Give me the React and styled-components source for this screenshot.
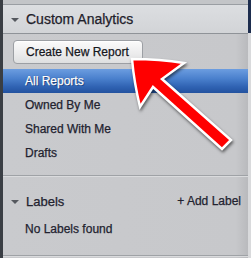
import styled, { createGlobalStyle } from 'styled-components'

const GlobalStyle = createGlobalStyle`
  html, body {
    margin: 0;
    padding: 0;
    background: #c8c9cc;
  }
  body {
    font-family: "Liberation Sans", Arial, sans-serif;
    -webkit-text-stroke: 0.25px currentColor;
  }
`

const Frame = styled.div`
  position: relative;
  width: 251px;
  height: 258px;
  display: flex;
  overflow: hidden;
`

const LeftStrip = styled.div`
  width: 3px;
  background: #3a3e44;
`

const RightStrip = styled.div`
  width: 3px;
  display: flex;
  flex-direction: column;
  background: #d9dadc;

  &::before {
    content: '';
    height: 33px;
    background: #1d2d4e;
  }
`

const Panel = styled.div`
  flex: 1;
  display: flex;
  flex-direction: column;
  background: linear-gradient(90deg, #c9cacd 0%, #c7c8cb 95%, #b9babd 100%);
`

const TopBand = styled.div`
  height: 4px;
  background: #c3c5c8;
  border-bottom: 1px solid #9a9ea3;
`

const Header = styled.div`
  height: 28px;
  display: flex;
  align-items: center;
  padding-left: 8px;
  gap: 7px;
  background: linear-gradient(180deg, #dcdee1 0%, #d2d4d7 100%);
  border-bottom: 1px solid #8f9398;
  color: #1f212b;
  font-size: 14px;
`

const Caret = styled.span`
  width: 0;
  height: 0;
  border-left: 4px solid transparent;
  border-right: 4px solid transparent;
  border-top: 4px solid #55585e;
  margin-top: 1px;
`

const ButtonRow = styled.div`
  padding: 6px 0 5px 10px;
`

const Button = styled.button`
  width: 130px;
  height: 24px;
  border: 1px solid #9c9fa4;
  border-radius: 4px;
  background: linear-gradient(180deg, #fbfbfb 0%, #ebebec 60%, #dedfe0 100%);
  box-shadow: inset 0 1px 0 #ffffff;
  font-family: "Liberation Sans", Arial, sans-serif;
  font-size: 12px;
  color: #16171d;
  -webkit-text-stroke: 0.25px #16171d;
  text-align: left;
  padding: 0 0 0 12px;
`

const NavList = styled.div`
  display: flex;
  flex-direction: column;
`

const NavItem = styled.div`
  height: 24px;
  display: flex;
  align-items: center;
  padding-left: 22px;
  font-size: 12px;
  color: ${p => (p.$active ? '#ffffff' : '#22222f')};
  background: ${p =>
    p.$active
      ? 'linear-gradient(180deg, #6c9de0 0%, #4a80cd 40%, #2f62b2 75%, #23529f 100%)'
      : 'transparent'};
  text-shadow: ${p => (p.$active ? '0 0 1px #1a3a70, 1px 1px 0 #1f4787' : 'none')};
`

const Divider = styled.div`
  margin-top: 10px;
  border-top: 1px solid #9fa2a6;
  border-bottom: 1px solid #dadbdd;
`

const LabelsHead = styled.div`
  height: 24px;
  margin-top: 12px;
  display: flex;
  align-items: center;
  padding-left: 8px;
  padding-right: 7px;
  gap: 7px;
  font-size: 13px;
  color: #22222f;
`

const AddLabel = styled.span`
  margin-left: auto;
  font-size: 12px;
`

const Empty = styled.div`
  height: 24px;
  display: flex;
  align-items: center;
  padding-left: 22px;
  font-size: 12px;
  color: #22222f;
  margin-top: 4px;
`

const BottomRule = styled.div`
  margin-top: 14px;
  border-top: 1px solid #9fa2a6;
  border-bottom: 1px solid #dadbdd;
`

const ArrowLayer = styled.svg`
  position: absolute;
  left: 0;
  top: 0;
  width: 251px;
  height: 258px;
  pointer-events: none;
  filter: drop-shadow(1px 2px 1.5px rgba(0, 0, 0, 0.55));
`

export default function App() {
  return (
    <>
      <GlobalStyle />
      <Frame>
        <LeftStrip />
        <Panel>
          <TopBand />
          <Header>
            <Caret />
            Custom Analytics
          </Header>
          <ButtonRow>
            <Button>Create New Report</Button>
          </ButtonRow>
          <NavList>
            <NavItem $active>All Reports</NavItem>
            <NavItem>Owned By Me</NavItem>
            <NavItem>Shared With Me</NavItem>
            <NavItem>Drafts</NavItem>
          </NavList>
          <Divider />
          <LabelsHead>
            <Caret />
            Labels
            <AddLabel>+ Add Label</AddLabel>
          </LabelsHead>
          <Empty>No Labels found</Empty>
          <BottomRule />
        </Panel>
        <RightStrip />
        <ArrowLayer viewBox="0 0 251 258">
          <path
            d="M132,59 Q160,59 184,63 L162,79 L231,140 L222,149 L153,87 L140,107 Q134,82 132,59 Z"
            fill="#ff0000"
            stroke="#ffffff"
            strokeWidth="2.5"
            strokeLinejoin="miter"
          />
        </ArrowLayer>
      </Frame>
    </>
  )
}
